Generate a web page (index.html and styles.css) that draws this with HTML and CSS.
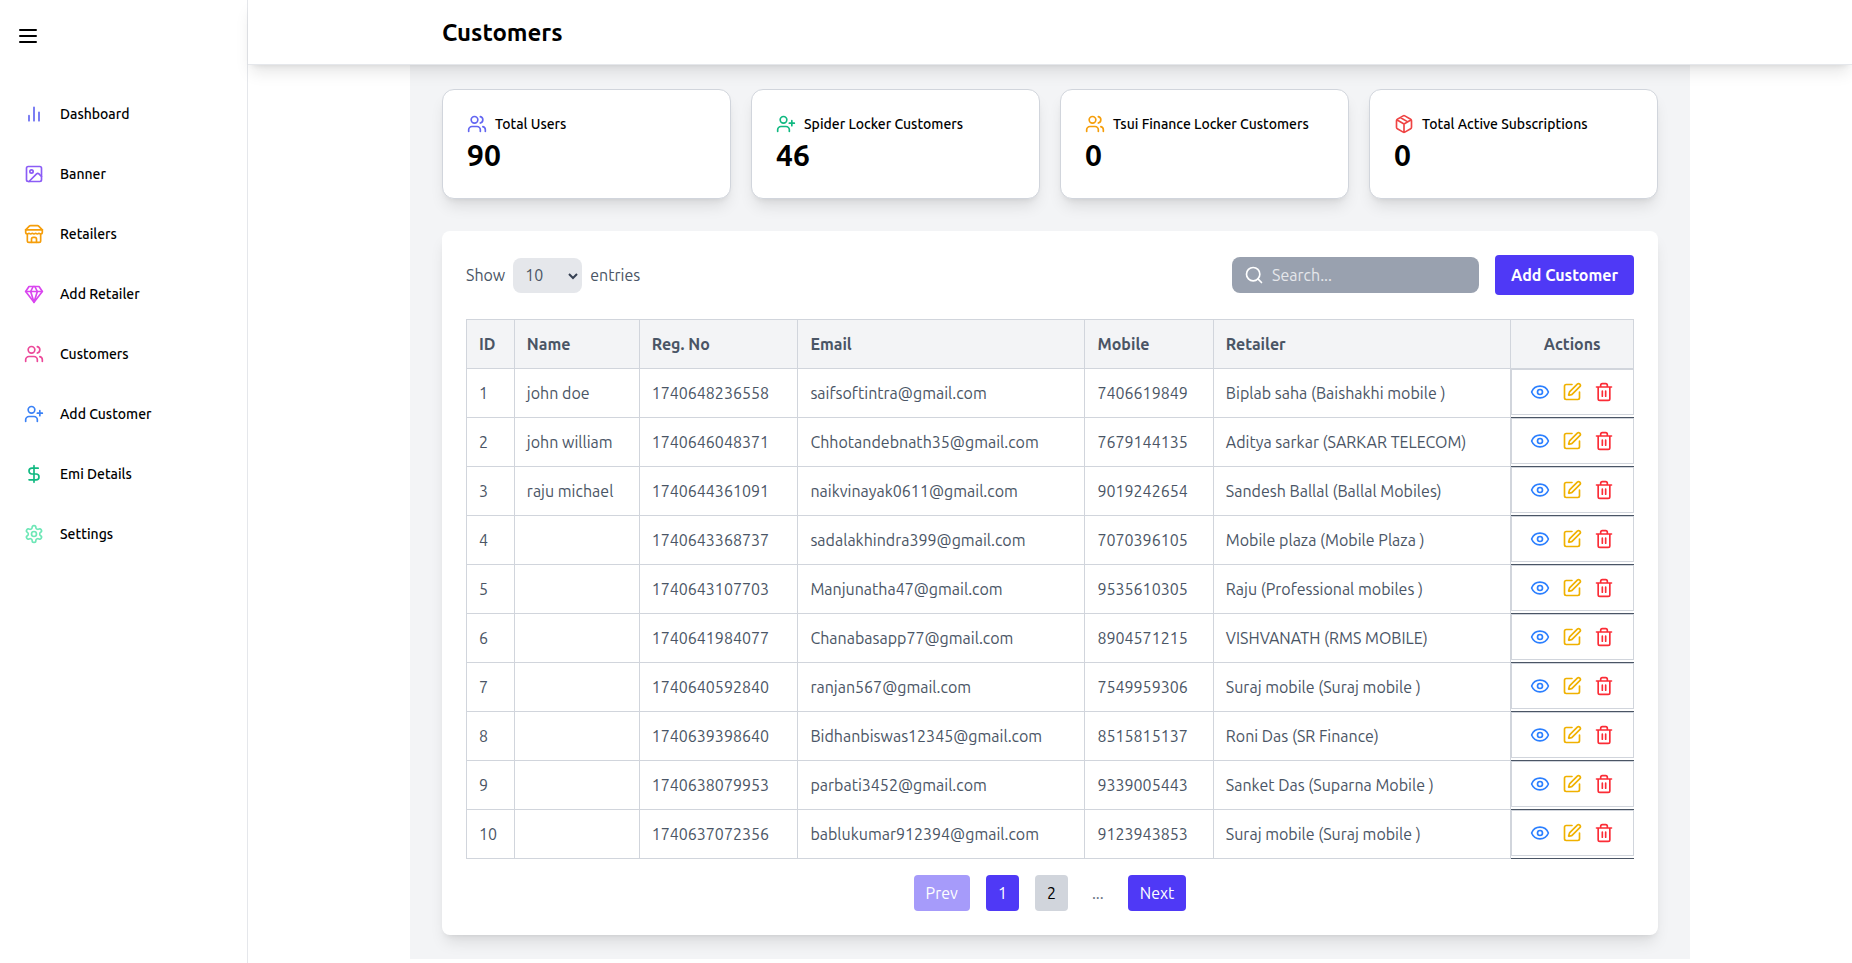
FILE: index.html
```html
<!DOCTYPE html>
<html lang="en">
<head>
<meta charset="utf-8">
<meta name="viewport" content="width=device-width, initial-scale=1">
<title>Customers</title>
<link rel="stylesheet" href="styles.css">
</head>
<body>
<svg class="sprite" aria-hidden="true">
  <symbol id="menu" viewBox="0 0 24 24"><path d="M4 6h16M4 12h16M4 18h16"/></symbol>
  <symbol id="bars" viewBox="0 0 24 24"><path d="M18 20V10M12 20V4M6 20v-6"/></symbol>
  <symbol id="image" viewBox="0 0 24 24"><rect x="3" y="3" width="18" height="18" rx="2"/><circle cx="9" cy="9" r="2"/><path d="m21 15-3.086-3.086a2 2 0 0 0-2.828 0L6 21"/></symbol>
  <symbol id="store" viewBox="0 0 24 24"><path d="m2 7 4.41-4.41A2 2 0 0 1 7.83 2h8.34a2 2 0 0 1 1.42.59L22 7"/><path d="M4 12v8a2 2 0 0 0 2 2h12a2 2 0 0 0 2-2v-8"/><path d="M15 22v-4a2 2 0 0 0-2-2h-2a2 2 0 0 0-2 2v4"/><path d="M2 7h20"/><path d="M22 7v3a2 2 0 0 1-2 2a2.7 2.7 0 0 1-1.59-.63.7.7 0 0 0-.82 0A2.7 2.7 0 0 1 16 12a2.7 2.7 0 0 1-1.59-.63.7.7 0 0 0-.82 0A2.7 2.7 0 0 1 12 12a2.7 2.7 0 0 1-1.59-.63.7.7 0 0 0-.82 0A2.7 2.7 0 0 1 8 12a2.7 2.7 0 0 1-1.59-.63.7.7 0 0 0-.82 0A2.7 2.7 0 0 1 4 12a2 2 0 0 1-2-2V7"/></symbol>
  <symbol id="gem" viewBox="0 0 24 24"><path d="M6 3h12l4 6-10 13L2 9Z"/><path d="M11 3 8 9l4 13 4-13-3-6"/><path d="M2 9h20"/></symbol>
  <symbol id="users" viewBox="0 0 24 24"><path d="M16 21v-2a4 4 0 0 0-4-4H6a4 4 0 0 0-4 4v2"/><circle cx="9" cy="7" r="4"/><path d="M22 21v-2a4 4 0 0 0-3-3.87M16 3.13a4 4 0 0 1 0 7.75"/></symbol>
  <symbol id="user-plus" viewBox="0 0 24 24"><path d="M16 21v-2a4 4 0 0 0-4-4H6a4 4 0 0 0-4 4v2"/><circle cx="9" cy="7" r="4"/><path d="M19 8v6M22 11h-6"/></symbol>
  <symbol id="dollar" viewBox="0 0 24 24"><path d="M12 2v20M17 5H9.5a3.5 3.5 0 0 0 0 7h5a3.5 3.5 0 0 1 0 7H6"/></symbol>
  <symbol id="gear" viewBox="0 0 24 24"><path d="M12.22 2h-.44a2 2 0 0 0-2 2v.18a2 2 0 0 1-1 1.73l-.43.25a2 2 0 0 1-2 0l-.15-.08a2 2 0 0 0-2.73.73l-.22.38a2 2 0 0 0 .73 2.73l.15.1a2 2 0 0 1 1 1.72v.51a2 2 0 0 1-1 1.74l-.15.09a2 2 0 0 0-.73 2.73l.22.38a2 2 0 0 0 2.73.73l.15-.08a2 2 0 0 1 2 0l.43.25a2 2 0 0 1 1 1.73V20a2 2 0 0 0 2 2h.44a2 2 0 0 0 2-2v-.18a2 2 0 0 1 1-1.73l.43-.25a2 2 0 0 1 2 0l.15.08a2 2 0 0 0 2.73-.73l.22-.39a2 2 0 0 0-.73-2.73l-.15-.08a2 2 0 0 1-1-1.74v-.5a2 2 0 0 1 1-1.74l.15-.09a2 2 0 0 0 .73-2.73l-.22-.38a2 2 0 0 0-2.73-.73l-.15.08a2 2 0 0 1-2 0l-.43-.25a2 2 0 0 1-1-1.73V4a2 2 0 0 0-2-2z"/><circle cx="12" cy="12" r="3"/></symbol>
  <symbol id="package" viewBox="0 0 24 24"><path d="m7.5 4.27 9 5.15M21 8a2 2 0 0 0-1-1.73l-7-4a2 2 0 0 0-2 0l-7 4A2 2 0 0 0 3 8v8a2 2 0 0 0 1 1.73l7 4a2 2 0 0 0 2 0l7-4A2 2 0 0 0 21 16ZM3.3 7l8.7 5 8.7-5M12 22V12"/></symbol>
  <symbol id="search" viewBox="0 0 24 24"><circle cx="11" cy="11" r="8"/><path d="m21 21-4.3-4.3"/></symbol>
  <symbol id="eye" viewBox="0 0 24 24"><path d="M2.062 12.348a1 1 0 0 1 0-.696 10.75 10.75 0 0 1 19.876 0 1 1 0 0 1 0 .696 10.75 10.75 0 0 1-19.876 0"/><circle cx="12" cy="12" r="3"/></symbol>
  <symbol id="edit" viewBox="0 0 24 24"><path d="M12 3H5a2 2 0 0 0-2 2v14a2 2 0 0 0 2 2h14a2 2 0 0 0 2-2v-7"/><path d="M18.375 2.625a1 1 0 0 1 3 3l-9.013 9.014a2 2 0 0 1-.853.505l-2.873.84a.5.5 0 0 1-.62-.62l.84-2.873a2 2 0 0 1 .506-.852z"/></symbol>
  <symbol id="trash" viewBox="0 0 24 24"><path d="M3 6h18M19 6v14a2 2 0 0 1-2 2H7a2 2 0 0 1-2-2V6M8 6V4a2 2 0 0 1 2-2h4a2 2 0 0 1 2 2v2M10 11v6M14 11v6"/></symbol>
  <symbol id="chevron" viewBox="0 0 10 10"><path d="m1 3 4 4 4-4"/></symbol>
</svg>
<div class="app">
  <aside class="sidebar">
    <button class="menu-button" type="button" aria-label="Toggle menu"><svg class="icon icon-lg"><use href="#menu"/></svg></button>
    <nav class="nav">
      <a class="nav-link" href="#dashboard"><svg class="icon indigo"><use href="#bars"/></svg>Dashboard</a>
      <a class="nav-link" href="#banner"><svg class="icon violet"><use href="#image"/></svg>Banner</a>
      <a class="nav-link" href="#retailers"><svg class="icon amber"><use href="#store"/></svg>Retailers</a>
      <a class="nav-link" href="#add-retailer"><svg class="icon fuchsia"><use href="#gem"/></svg>Add Retailer</a>
      <a class="nav-link" href="#customers"><svg class="icon pink"><use href="#users"/></svg>Customers</a>
      <a class="nav-link" href="#add-customer"><svg class="icon blue"><use href="#user-plus"/></svg>Add Customer</a>
      <a class="nav-link" href="#emi"><svg class="icon green"><use href="#dollar"/></svg>Emi Details</a>
      <a class="nav-link" href="#settings"><svg class="icon mint"><use href="#gear"/></svg>Settings</a>
    </nav>
  </aside>
  <div class="page">
    <header class="header"><h1 class="title">Customers</h1></header>
    <main class="content">
      <section class="stats">
        <div class="stat"><h2 class="stat-label"><svg class="icon indigo"><use href="#users"/></svg>Total Users</h2><p class="stat-value">90</p></div>
        <div class="stat"><h2 class="stat-label"><svg class="icon green"><use href="#user-plus"/></svg>Spider Locker Customers</h2><p class="stat-value">46</p></div>
        <div class="stat"><h2 class="stat-label"><svg class="icon amber"><use href="#users"/></svg>Tsui Finance Locker Customers</h2><p class="stat-value">0</p></div>
        <div class="stat"><h2 class="stat-label"><svg class="icon red"><use href="#package"/></svg>Total Active Subscriptions</h2><p class="stat-value">0</p></div>
      </section>
      <section class="panel">
        <div class="toolbar">
          <div class="entries">
            <label for="entries">Show</label>
            <span class="select-wrap"><select class="select" id="entries"><option>10</option><option>25</option><option>50</option></select><svg class="chevron"><use href="#chevron"/></svg></span>
            <span>entries</span>
          </div>
          <div class="tools">
            <label class="search"><svg class="icon"><use href="#search"/></svg><input class="search-input" type="text" placeholder="Search..." aria-label="Search"></label>
            <button class="add-button" type="button">Add Customer</button>
          </div>
        </div>
        <table class="table">
          <colgroup><col class="c-id"><col class="c-name"><col class="c-reg"><col class="c-email"><col class="c-mobile"><col class="c-retailer"><col class="c-actions"></colgroup>
          <thead><tr><th>ID</th><th>Name</th><th>Reg. No</th><th>Email</th><th>Mobile</th><th>Retailer</th><th class="center">Actions</th></tr></thead>
          <tbody id="rows"></tbody>
        </table>
        <nav class="pagination" aria-label="Pages">
          <button class="page-button faded" type="button">Prev</button>
          <button class="page-button" type="button">1</button>
          <button class="page-button plain" type="button">2</button>
          <span class="dots">...</span>
          <button class="page-button" type="button">Next</button>
        </nav>
      </section>
    </main>
  </div>
</div>
<script src="script.js"></script>
</body>
</html>
```
FILE: styles.css
```css
*, *::before, *::after { box-sizing: border-box; }
body { margin: 0; background: #fff; color: #000; font-family: Ubuntu, Roboto, "Noto Sans", sans-serif; font-size: 16px; line-height: 24px; }
h1, h2, p { margin: 0; }
button, input, select { font: inherit; color: inherit; border: 0; margin: 0; }
button { cursor: pointer; }
.sprite { display: none; }

.icon { width: 20px; height: 20px; flex: none; fill: none; stroke: currentColor; stroke-width: 2; stroke-linecap: round; stroke-linejoin: round; }
.icon-lg { width: 24px; height: 24px; }
.indigo { color: #6366f1; }
.violet { color: #8b5cf6; }
.amber { color: #f59e0b; }
.fuchsia { color: #d946ef; }
.pink { color: #ec4899; }
.blue { color: #3b82f6; }
.green { color: #10b981; }
.mint { color: #6ee7b7; }
.red { color: #ef4444; }

.app { display: flex; min-height: 100vh; }
.sidebar { flex: none; width: 248px; padding: 16px 8px; border-right: 1px solid #e5e7eb; }
.menu-button { display: flex; padding: 8px; background: none; }
.nav { margin-top: 32px; display: flex; flex-direction: column; gap: 8px; }
.nav-link { display: flex; align-items: center; gap: 16px; padding: 16px; color: #000; font-size: 14px; line-height: 20px; font-weight: 500; text-decoration: none; }

.page { flex: 1; min-width: 0; }
.header { position: relative; z-index: 1; background: #fff; border-bottom: 1px solid #e5e7eb; box-shadow: 0 10px 15px -3px rgba(0,0,0,.1), 0 4px 6px -4px rgba(0,0,0,.1); }
.title { max-width: 1280px; margin: 0 auto; padding: 17px 32px 15px; font-size: 24px; line-height: 32px; font-weight: 600; }
.content { max-width: 1280px; margin: 0 auto; padding: 24px 32px; background: #f3f4f6; }

.stats { display: grid; grid-template-columns: repeat(4, 1fr); gap: 20px; margin-bottom: 32px; }
.stat { padding: 24px; background: #fff; border: 1px solid #d1d5dc; border-radius: 12px; box-shadow: 0 10px 15px -3px rgba(0,0,0,.1), 0 4px 6px -4px rgba(0,0,0,.1); }
.stat-label { display: flex; align-items: center; gap: 8px; font-size: 14px; line-height: 20px; font-weight: 500; }
.stat-value { margin-top: 4px; margin-bottom: 2px; font-size: 30px; line-height: 34px; font-weight: 600; }

.panel { padding: 24px; background: #fff; border-radius: 8px; color: #4a5565; box-shadow: 0 10px 15px -3px rgba(0,0,0,.1), 0 4px 6px -4px rgba(0,0,0,.1); }
.toolbar { display: flex; align-items: center; justify-content: space-between; margin-bottom: 24px; }
.entries { display: flex; align-items: center; gap: 8px; }
.select-wrap { position: relative; display: flex; }
.select { appearance: none; width: 69px; height: 35px; padding: 0 12px; border-radius: 8px; background: #e5e7eb; color: #4a5565; }
.chevron { position: absolute; right: 4px; top: 13px; width: 10px; height: 10px; fill: none; stroke: #364153; stroke-width: 2; pointer-events: none; }
.tools { display: flex; align-items: center; gap: 16px; }
.search { display: flex; align-items: center; gap: 8px; width: 247px; height: 36px; padding: 0 12px; border-radius: 8px; background: #99a1af; color: #fff; }
.search-input { flex: 1; min-width: 0; padding: 0; background: none; outline: 0; }
.search-input::placeholder { color: #e5e7eb; opacity: 1; }
.add-button { padding: 8px 16px; border-radius: 4px; background: #4f39f6; color: #fff; font-weight: 600; }

.table { width: 100%; table-layout: fixed; border-collapse: collapse; }
.c-id { width: 4.1%; }
.c-name { width: 10.7%; }
.c-reg { width: 13.6%; }
.c-email { width: 24.6%; }
.c-mobile { width: 11%; }
.c-retailer { width: 25.5%; }
.table th, .table td { height: 49px; padding: 12px; border: 1px solid #d1d5dc; text-align: left; white-space: nowrap; }
.table th { background: #f3f4f6; font-weight: 600; }
.table th.center { text-align: center; }
.table td.actions { padding: 0; border-width: 0 0 1px; border-color: #4a5565; vertical-align: top; }
.action-box { display: flex; align-items: center; justify-content: center; gap: 12px; height: 46px; border: 1px solid #d1d5dc; }
.action { display: flex; padding: 0; background: none; }
.view { color: #2b7fff; }
.edit { color: #f0b100; }
.delete { color: #fb2c36; }

.pagination { display: flex; justify-content: center; align-items: center; gap: 16px; margin-top: 16px; }
.page-button { padding: 6px 12px; border-radius: 4px; background: #4f39f6; color: #fff; }
.faded { opacity: .5; }
.plain { background: #d1d5dc; color: #000; }
.dots { padding: 0 8px; color: #6a7282; }
```
FILE: script.js
```js
const customers = [
  ["john doe", "1740648236558", "saifsoftintra@gmail.com", "7406619849", "Biplab saha (Baishakhi mobile )"],
  ["john william", "1740646048371", "Chhotandebnath35@gmail.com", "7679144135", "Aditya sarkar (SARKAR TELECOM)"],
  ["raju michael", "1740644361091", "naikvinayak0611@gmail.com", "9019242654", "Sandesh Ballal (Ballal Mobiles)"],
  ["", "1740643368737", "sadalakhindra399@gmail.com", "7070396105", "Mobile plaza (Mobile Plaza )"],
  ["", "1740643107703", "Manjunatha47@gmail.com", "9535610305", "Raju (Professional mobiles )"],
  ["", "1740641984077", "Chanabasapp77@gmail.com", "8904571215", "VISHVANATH (RMS MOBILE)"],
  ["", "1740640592840", "ranjan567@gmail.com", "7549959306", "Suraj mobile (Suraj mobile )"],
  ["", "1740639398640", "Bidhanbiswas12345@gmail.com", "8515815137", "Roni Das (SR Finance)"],
  ["", "1740638079953", "parbati3452@gmail.com", "9339005443", "Sanket Das (Suparna Mobile )"],
  ["", "1740637072356", "bablukumar912394@gmail.com", "9123943853", "Suraj mobile (Suraj mobile )"]
];
const action = (kind, label, icon) =>
  `<button class="action ${kind}" type="button" aria-label="${label}"><svg class="icon"><use href="#${icon}"/></svg></button>`;
const actions = `<td class="actions"><div class="action-box">${action("view", "View", "eye")}${action("edit", "Edit", "edit")}${action("delete", "Delete", "trash")}</div></td>`;
document.getElementById("rows").innerHTML = customers
  .map((c, i) => `<tr>${[i + 1, ...c].map(v => `<td>${v}</td>`).join("")}${actions}</tr>`)
  .join("");
```
